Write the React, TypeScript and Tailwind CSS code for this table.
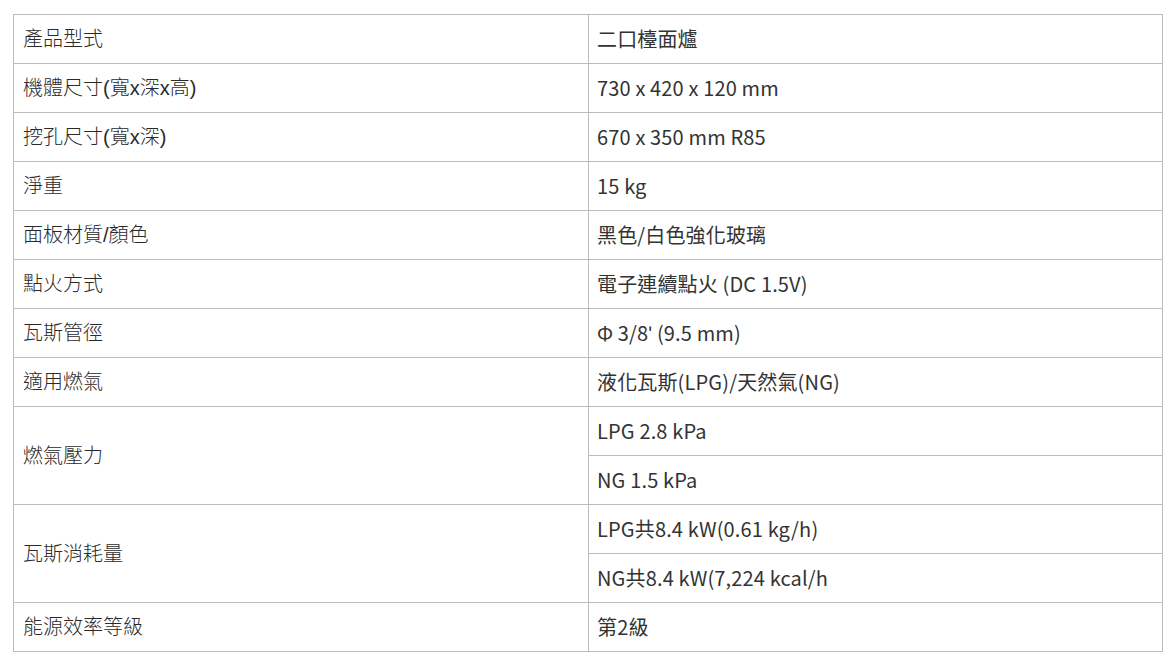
import React from "react";

const L = '"Liberation Sans", "Noto Sans CJK TC", sans-serif';
const R = '"Noto Sans CJK TC", sans-serif';

type Row = { k: string; v: string[] };
const rows: Row[] = [
  { k: "產品型式", v: ["二口檯面爐"] },
  { k: "機體尺寸(寬x深x高)", v: ["730 x 420 x 120 mm"] },
  { k: "挖孔尺寸(寬x深)", v: ["670 x 350 mm R85"] },
  { k: "淨重", v: ["15 kg"] },
  { k: "面板材質/顏色", v: ["黑色/白色強化玻璃"] },
  { k: "點火方式", v: ["電子連續點火 (DC 1.5V)"] },
  { k: "瓦斯管徑", v: ["Φ 3/8ʹ (9.5 mm)"] },
  { k: "適用燃氣", v: ["液化瓦斯(LPG)/天然氣(NG)"] },
  { k: "燃氣壓力", v: ["LPG 2.8 kPa", "NG 1.5 kPa"] },
  { k: "瓦斯消耗量", v: ["LPG共8.4 kW(0.61 kg/h)", "NG共8.4 kW(7,224 kcal/h"] },
  { k: "能源效率等級", v: ["第2級"] },
];

export default function App() {
  return (
    <div className="bg-white w-[1173px] h-[658px] pt-[14px] pl-[13px]">
      <table className="border-collapse w-[1150px] table-fixed text-[20px] text-[#2a2a2a]">
        <colgroup>
          <col className="w-[575px]" />
          <col />
        </colgroup>
        <tbody>
          {rows.map((r) =>
            r.v.map((v, i) => (
              <tr key={r.k + i} className="h-[49px]">
                {i === 0 && (
                  <td
                    rowSpan={r.v.length}
                    className="border border-[#bbb] pl-[9px] pr-2 py-0 align-middle leading-[24px] font-light"
                    style={{ fontFamily: L }}
                  >
                    {r.k}
                  </td>
                )}
                <td
                  className="border border-[#bbb] pl-[8px] pr-2 py-0 align-middle leading-[24px] tracking-[0.15px] text-[#333]"
                  style={{ fontFamily: R }}
                >
                  {v}
                </td>
              </tr>
            ))
          )}
        </tbody>
      </table>
    </div>
  );
}
